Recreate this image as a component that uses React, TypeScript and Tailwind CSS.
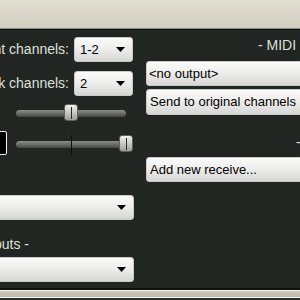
import React from 'react';

const font = { fontFamily: '"Liberation Sans", Arial, sans-serif' };

function Arrow() {
  return (
    <svg width="9" height="5" viewBox="0 0 9 5" className="shrink-0">
      <path d="M0 0 H9 L4.5 5 Z" fill="#000" />
    </svg>
  );
}

function Combo({ label, className }: { label: string; className: string }) {
  return (
    <div
      className={`flex items-center justify-between rounded-[3px] border border-[#c9cbc8] bg-gradient-to-b from-[#fbfbfa] via-[#ececea] to-[#d6d7d4] pl-[5px] pr-[7px] text-[13px] text-black ${className}`}
    >
      <span className="whitespace-nowrap">{label}</span>
      <Arrow />
    </div>
  );
}

function Button({ label, className }: { label: string; className: string }) {
  return (
    <div
      className={`flex items-center rounded-[3px] border border-[#c9cbc8] bg-gradient-to-b from-[#fbfbfa] via-[#ececea] to-[#d6d7d4] pl-[3px] text-[13px] text-black whitespace-nowrap ${className}`}
    >
      {label}
    </div>
  );
}

function Slider({ width, thumb, center }: { width: number; thumb: number; center?: number }) {
  return (
    <div className="relative h-[18px]" style={{ width }}>
      <div className="absolute left-0 right-0 top-[6px] h-[7px] rounded-full bg-gradient-to-b from-[#8a8c8a] via-[#6a6c6a] to-[#454745]" />
      {center !== undefined && (
        <div className="absolute top-0 h-[20px] w-px bg-[#0c0e0c]" style={{ left: center }} />
      )}
      <div
        className="absolute top-0 flex h-[17px] w-[14px] justify-center rounded-[3px] border border-[#5e605e] bg-gradient-to-b from-[#f0f0ee] via-[#c8c9c6] to-[#9c9e9b]"
        style={{ left: thumb }}
      >
        <div className="mt-[2px] h-[12px] w-px bg-[#2a2c2a]" />
      </div>
    </div>
  );
}

export default function App() {
  return (
    <div className="h-[300px] w-[300px] overflow-hidden bg-[#212622]" style={font}>
      <div className="h-[28px] bg-gradient-to-b from-[#e2dfd4] to-[#d2cebf]" />
      <div className="h-px bg-[#8f8c80]" />
      <div className="h-px bg-[#0a0c0a]" />

      <div className="flex h-[258px] text-[14px] text-[#dde0dc]">
        {/* left column */}
        <div className="flex w-[146px] shrink-0 flex-col">
          <div className="mt-[7px] flex h-[25px] items-center">
            <div className="flex w-[69px] justify-end overflow-hidden whitespace-nowrap">Parent channels:</div>
            <Combo label="1-2" className="ml-[5px] h-[25px] w-[59px]" />
          </div>
          <div className="mt-[9px] flex h-[25px] items-center">
            <div className="flex w-[69px] justify-end overflow-hidden whitespace-nowrap">Track channels:</div>
            <Combo label="2" className="ml-[5px] h-[25px] w-[59px]" />
          </div>
          <div className="mt-[8px] pl-[16px]">
            <Slider width={110} thumb={48} />
          </div>
          <div className="mt-[9px] flex h-[24px] items-center">
            <div className="-ml-[20px] h-[24px] w-[27px] rounded-[2px] border border-[#f2f2f0] bg-black" />
            <div className="ml-[9px] pt-[2px]">
              <Slider width={116} thumb={103} center={55} />
            </div>
          </div>
          <Combo label="" className="-ml-[10px] mt-[40px] h-[25px] w-[144px]" />
          <div className="mt-[16px] flex h-[16px] w-[29px] items-center justify-end overflow-hidden whitespace-nowrap leading-[16px]">
            - Audio Hardware Outputs -
          </div>
          <Combo label="" className="-ml-[10px] mt-[5px] h-[25px] w-[144px]" />
        </div>

        {/* right column */}
        <div className="flex w-[200px] shrink-0 flex-col">
          <div className="mt-[7px] h-[16px] whitespace-nowrap pl-[112px] leading-[16px]">- MIDI Hardware Output -</div>
          <Combo label="<no output>" className="mt-[8px] h-[25px] w-[200px] !pl-[2px]" />
          <Button label="Send to original channels" className="mt-[3px] h-[26px] w-[200px]" />
          <div className="mt-[19px] h-[16px] whitespace-nowrap pl-[150px] leading-[16px]">- Receives -</div>
          <Button label="Add new receive..." className="mt-[7px] h-[25px] w-[200px]" />
        </div>
      </div>

      <div className="h-[2px] bg-[#0e100e]" />
      <div className="h-px bg-[#f4f4f2]" />
      <div className="h-[6px] bg-gradient-to-b from-[#cfcbbd] to-[#bdb9aa]" />
      <div className="h-px bg-[#f4f4f2]" />
      <div className="h-[2px] bg-[#2a2c2a]" />
    </div>
  );
}
